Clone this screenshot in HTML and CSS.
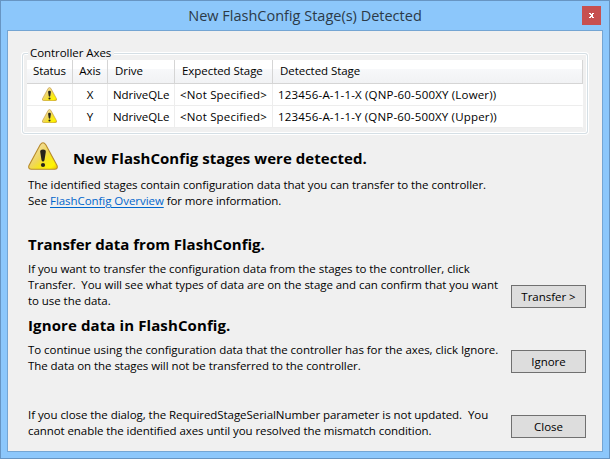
FILE: index.html
```
<!DOCTYPE html>
<html lang="en">
<head>
<meta charset="utf-8">
<title>New FlashConfig Stage(s) Detected</title>
<link rel="stylesheet" href="styles.css">
</head>
<body>
<svg width="0" height="0" class="defs" aria-hidden="true">
  <defs>
    <linearGradient id="gold" x1="0" y1="0" x2="1" y2="1">
      <stop offset="0.2" stop-color="#f3df9c"/>
      <stop offset="0.48" stop-color="#efd65c"/>
      <stop offset="0.62" stop-color="#f6e424"/>
      <stop offset="0.85" stop-color="#fff500"/>
      <stop offset="1" stop-color="#e8b900"/>
    </linearGradient>
    <symbol id="warning" viewBox="0 0 30 28">
      <path d="M12.200 2.800Q15 -1.200 17.800 2.800L29 23.400Q30.200 27.300 26.600 27.300H3.400Q-.2 27.300 1 23.400Z" fill="url(#gold)" stroke="#b78a2c" stroke-width="1.1"/>
      <path d="M12.200 9.800Q12.200 7.600 15 7.600T17.800 9.800L16.500 18Q16.200 19.600 15 19.600T13.500 18Z" fill="#26231a"/>
      <ellipse cx="15" cy="23" rx="2.1" ry="1.9" fill="#26231a"/>
    </symbol>
  </defs>
</svg>
<div class="window">
  <header class="titlebar">
    <h1 class="title">New FlashConfig Stage(s) Detected</h1>
    <button class="win-close" aria-label="Close window"><svg width="5" height="5" viewBox="0 0 5 5" shape-rendering="crispEdges"><path d="M0 0h2v1h1V0h2v1H4v1H3.500v1H4v1h1v1H3V4H2v1H0V4h1V3h.5V2H1V1H0Z" fill="#fff"/></svg></button>
  </header>
  <main class="client">
    <section class="group">
      <div class="legend">Controller Axes</div>
      <div class="table">
        <div class="row head">
          <div class="cell mid">Status</div><div class="cell mid">Axis</div><div class="cell">Drive</div><div class="cell">Expected Stage</div><div class="cell">Detected Stage</div>
        </div>
        <div class="row">
          <div class="cell mid"><svg class="small-icon"><use href="#warning"/></svg></div><div class="cell mid">X</div><div class="cell">NdriveQLe</div><div class="cell wide">&lt;Not Specified&gt;</div><div class="cell wide">123456-A-1-1-X (QNP-60-500XY (Lower))</div>
        </div>
        <div class="row">
          <div class="cell mid"><svg class="small-icon"><use href="#warning"/></svg></div><div class="cell mid">Y</div><div class="cell">NdriveQLe</div><div class="cell wide">&lt;Not Specified&gt;</div><div class="cell wide">123456-A-1-1-Y (QNP-60-500XY (Upper))</div>
        </div>
      </div>
    </section>
    <section class="intro">
      <div class="banner"><svg class="big-icon"><use href="#warning"/></svg><h2>New FlashConfig stages were detected.</h2></div>
      <p><span class="line">The identified stages contain configuration data that you can transfer to the controller.</span>
      <span class="line">See <a class="link">FlashConfig Overview</a><span class="after-link"> for more information.</span></span></p>
    </section>
    <section class="option transfer">
      <div class="text">
        <h2 class="transfer-title">Transfer data from FlashConfig.</h2>
        <p><span class="line">If you want to transfer the configuration data from the stages to the controller, click</span>
        <span class="line">Transfer.&nbsp; You will see what types of data are on the stage and can confirm that you want</span>
        <span class="line">to use the data.</span></p>
      </div>
      <button class="btn">Transfer &gt;</button>
    </section>
    <section class="option ignore">
      <div class="text">
        <h2 class="ignore-title">Ignore data in FlashConfig.</h2>
        <p><span class="line">To continue using the configuration data that the controller has for the axes, click Ignore.</span>
        <span class="line">The data on the stages will not be transferred to the controller.</span></p>
      </div>
      <button class="btn">Ignore</button>
    </section>
    <section class="option close">
      <div class="text">
        <p><span class="line">If you close the dialog, the RequiredStageSerialNumber parameter is not updated.&nbsp; You</span>
        <span class="line tight">cannot enable the identified axes until you resolved the mismatch condition.</span></p>
      </div>
      <button class="btn">Close</button>
    </section>
  </main>
</div>
</body>
</html>
```
FILE: styles.css
```
* { box-sizing: border-box; }
body {
  margin: 0;
  color: #000;
  font: 11.5px/16px "Open Sans", "Noto Sans", sans-serif;
  letter-spacing: -0.055px;
}
.defs { display: block; height: 0; }
.window {
  width: 610px;
  height: 459px;
  padding: 0 6px 6px;
  border: 1px solid #6795c3;
  background: #8cc7fb;
}
.titlebar {
  display: grid;
  grid-template-columns: 1fr 19px;
  height: 29px;
  padding: 5px 2px 0 0;
}
.title {
  margin: 0;
  padding-left: 21px;
  color: #2b3a48;
  font-size: 14.5px;
  font-weight: 400;
  line-height: 20px;
  letter-spacing: 0;
  text-align: center;
}
.win-close {
  display: flex;
  align-items: center;
  justify-content: center;
  width: 19px;
  height: 19px;
  padding: 0;
  border: 0;
  background: #c75050;
}
.client {
  position: relative;
  z-index: 0;
  height: 422px;
  padding: 14px 14px 0;
  border: 1px solid #74a5d3;
  background: #f0f0f0;
}
.group {
  position: relative;
  display: flex;
  flex-direction: column;
  height: 89px;
  padding: 0 5px;
  background: linear-gradient(#f0f0f0, #f0f0f0) 6px 0 / 86px 16px no-repeat;
}
.group::before {
  content: "";
  position: absolute;
  inset: 8px 0 0;
  z-index: -1;
  border: 1px solid #d5dfe5;
  border-radius: 3px;
  box-shadow: inset 0 0 0 1px #fff, 0 0 0 1px #fff;
}
.legend { height: 15px; padding-left: 3px; }
.table {
  display: grid;
  grid-template-rows: 24px 22px 22px;
  background: #fff;
}
.row {
  display: grid;
  grid-template-columns: 46px 35px 67px 98px 1fr;
  line-height: 21px;
}
.cell {
  padding-left: 5px;
  border-right: 1px solid #ededed;
  border-bottom: 1px solid #ededed;
  white-space: nowrap;
}
.cell:last-child { border-right-color: #fff; }
.cell.mid { padding-left: 0; text-align: center; }
.cell.wide { letter-spacing: 0.18px; }
.head .cell {
  padding-left: 7px;
  border-color: #d5d5d5;
  background: linear-gradient(#fff 0 40%, #f7f8fa 41%, #f1f2f4);
}
.head .cell.mid { padding-left: 0; }
.small-icon { display: block; width: 15px; height: 14px; margin: 3px auto 0; }
.intro { height: 93px; padding: 7px 0 0 6px; }
.banner { display: flex; gap: 15px; height: 36px; }
.big-icon { width: 30px; height: 28px; margin-top: 1px; }
h2 {
  margin: 0;
  font-size: 15px;
  font-weight: 700;
  line-height: 20px;
  letter-spacing: 0.05px;
}
.banner h2 { margin-top: 7px; }
p { margin: 0; }
.line { display: block; white-space: nowrap; }
.tight { letter-spacing: -0.074px; }
.link { color: #0066cc; text-decoration: underline; text-underline-offset: 2px; }
.after-link { white-space: pre; letter-spacing: -0.1px; }
.option {
  display: grid;
  grid-template-columns: 1fr 75px;
  padding: 0 2px 0 6px;
}
.option h2 { height: 27px; }
.transfer { height: 81px; margin-top: 7px; }
.transfer-title { letter-spacing: 0; }
.ignore { height: 81px; }
.ignore-title { letter-spacing: 0.11px; }
.close { height: 40px; margin-top: 11px; }
.btn {
  width: 75px;
  height: 23px;
  padding: 0;
  border: 1px solid #707070;
  background: #ddd;
  color: #000;
  font: inherit;
  letter-spacing: -0.02px;
}
.transfer .btn { margin-top: 51px; }
.ignore .btn { margin-top: 35px; }
.close .btn { margin-top: 8px; }
```
